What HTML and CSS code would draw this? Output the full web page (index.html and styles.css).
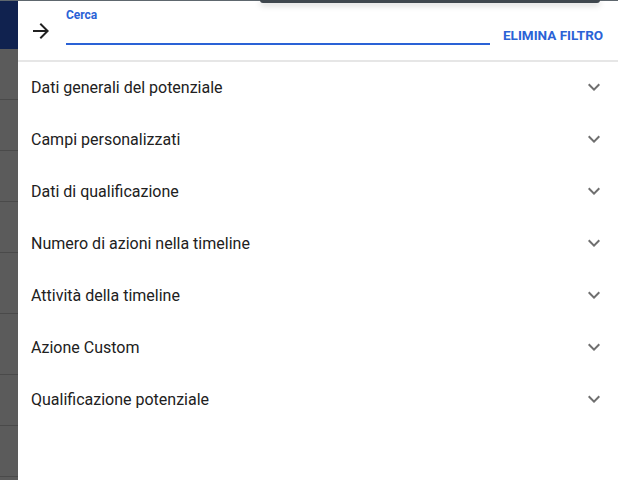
FILE: index.html
```html
<!DOCTYPE html>
<html lang="it">
<head>
    <meta charset="UTF-8">
    <title>Filtri</title>
    <link rel="stylesheet" href="styles.css">
</head>
<body>
    <div class="backdrop">
        <div class="bg-head"></div>
        <div class="bg-row"></div>
        <div class="bg-row"></div>
        <div class="bg-row"></div>
        <div class="bg-row"></div>
        <div class="bg-row tall"></div>
        <div class="bg-row tall"></div>
        <div class="bg-row"></div>
        <div class="bg-row"></div>
        <div class="bg-rest"></div>
    </div>

    <div class="drawer">
        <div class="search-bar">
            <button class="back-btn" aria-label="Chiudi">
                <svg viewBox="0 0 24 24" width="24" height="24"><path d="M12 4l-1.41 1.41L16.17 11H4v2h12.17l-5.58 5.59L12 20l8-8z"/></svg>
            </button>
            <div class="field">
                <label for="search">Cerca</label>
                <input type="text" id="search">
            </div>
            <button class="clear-btn">ELIMINA FILTRO</button>
        </div>

        <ul class="groups">
            <li class="group">Dati generali del potenziale <span class="chev"></span></li>
            <li class="group">Campi personalizzati <span class="chev"></span></li>
            <li class="group">Dati di qualificazione <span class="chev"></span></li>
            <li class="group">Numero di azioni nella timeline <span class="chev"></span></li>
            <li class="group">Attività della timeline <span class="chev"></span></li>
            <li class="group">Azione Custom <span class="chev"></span></li>
            <li class="group">Qualificazione potenziale <span class="chev"></span></li>
        </ul>
    </div>

    <div class="snackbar"></div>

    <script>
        // same chevron in every row
        document.querySelectorAll('.chev').forEach(function (el) {
            el.innerHTML = '<svg viewBox="0 0 24 24" width="24" height="24"><path d="M16.59 8.59L12 13.17 7.41 8.59 6 10l6 6 6-6z"/></svg>';
        });
    </script>
</body>
</html>
```

FILE: styles.css
```css
:root {
    --blue: #2a62d6;
    --text: #212121;
    --icon: #6f6f6f;
    --divider: #e6e6e6;
}

html, body {
    height: 100%;
}

body {
    margin: 0;
    display: flex;
    font-family: Roboto, "Liberation Sans", sans-serif;
    background: #fff;
    border-top: 1px solid #5e676e;
    box-sizing: border-box;
    overflow: hidden;
}

.backdrop {
    width: 18px;
    flex-shrink: 0;
    display: flex;
    flex-direction: column;
    background: #5b5b5b;
}

.bg-head {
    height: 48px;
    background: #10224f;
    flex-shrink: 0;
}

.bg-row {
    height: 50px;
    flex-shrink: 0;
    border-bottom: 1px solid #4a4a4a;
}

.bg-row.tall {
    height: 60px;
}

.bg-rest {
    flex: 1;
    min-height: 0;
}

.drawer {
    flex: 1;
    background: #fff;
}

.search-bar {
    height: 59px;
    display: flex;
    align-items: flex-start;
    border-bottom: 2px solid var(--divider);
}

.back-btn {
    margin: 18px 0 0 11px;
    padding: 0;
    border: none;
    background: none;
    width: 24px;
    height: 24px;
    fill: var(--text);
}

.back-btn svg {
    display: block;
}

.field {
    margin-left: 13px;
    width: 424px;
    display: flex;
    flex-direction: column;
}

.field label {
    margin-top: 6px;
    font-size: 12px;
    font-weight: 700;
    color: var(--blue);
    line-height: 16px;
}

.field input {
    height: 20px;
    border: none;
    border-bottom: 2px solid var(--blue);
    padding: 0;
    outline: none;
    font-size: 16px;
    font-family: inherit;
}

.clear-btn {
    margin: 26px 0 0 13px;
    padding: 0;
    border: none;
    background: none;
    color: var(--blue);
    font-family: inherit;
    font-size: 13.5px;
    font-weight: 700;
    line-height: 16px;
    white-space: nowrap;
}

.groups {
    list-style: none;
    margin: -1px 0 0;
    padding: 0;
}

.group {
    height: 52px;
    display: flex;
    align-items: center;
    justify-content: space-between;
    padding: 0 12px 0 13px;
    font-size: 16px;
    color: var(--text);
}

.chev {
    width: 24px;
    height: 24px;
    fill: var(--icon);
}

.chev svg {
    display: block;
}

.snackbar {
    position: absolute;
    top: 0;
    left: 260px;
    width: 340px;
    height: 3px;
    background: #3e464d;
    border-radius: 0 0 6px 6px;
    box-shadow: 0 2px 6px rgba(0, 0, 0, 0.25);
}
```
